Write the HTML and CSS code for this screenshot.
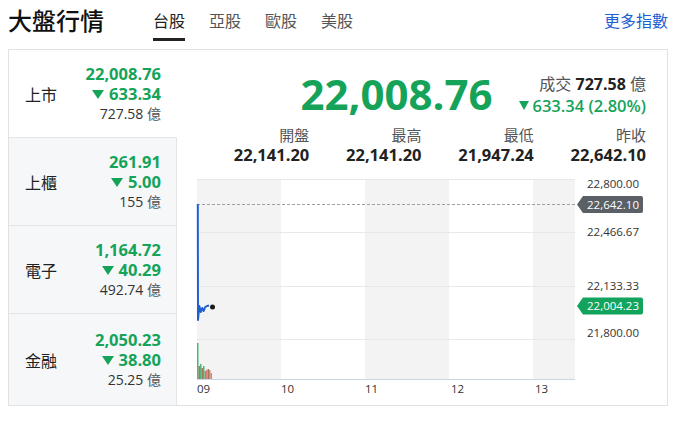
FILE: index.html
```html
<!DOCTYPE html>
<html lang="zh-Hant">
<head>
<meta charset="utf-8">
<title>大盤行情</title>
<link rel="stylesheet" href="styles.css">
</head>
<body>
<div class="header">
  <h1 class="title">大盤行情</h1>
  <nav class="tabs">
    <a class="tab active">台股</a>
    <a class="tab">亞股</a>
    <a class="tab">歐股</a>
    <a class="tab">美股</a>
  </nav>
  <a class="more">更多指數</a>
</div>
<div class="card">
  <div class="list">
    <div class="row active">
      <span class="name">上市</span>
      <div class="vals">
        <div class="price">22,008.76</div>
        <div class="chg"><span class="tri"></span>633.34</div>
        <div class="vol">727.58 <span class="unit">億</span></div>
      </div>
    </div>
    <div class="row">
      <span class="name">上櫃</span>
      <div class="vals">
        <div class="price">261.91</div>
        <div class="chg"><span class="tri"></span>5.00</div>
        <div class="vol">155 <span class="unit">億</span></div>
      </div>
    </div>
    <div class="row">
      <span class="name">電子</span>
      <div class="vals">
        <div class="price">1,164.72</div>
        <div class="chg"><span class="tri"></span>40.29</div>
        <div class="vol">492.74 <span class="unit">億</span></div>
      </div>
    </div>
    <div class="row">
      <span class="name">金融</span>
      <div class="vals">
        <div class="price">2,050.23</div>
        <div class="chg"><span class="tri"></span>38.80</div>
        <div class="vol">25.25 <span class="unit">億</span></div>
      </div>
    </div>
  </div>
  <div class="detail">
    <div class="quote">
      <div class="big">22,008.76</div>
      <div class="side">
        <div class="turnover"><span class="lbl">成交</span> <b>727.58</b> <span class="lbl">億</span></div>
        <div class="change"><span class="tri small"></span>633.34 (2.80%)</div>
      </div>
    </div>
    <div class="stats">
      <div class="stat"><div class="stat-l">開盤</div><div class="stat-v">22,141.20</div></div>
      <div class="stat"><div class="stat-l">最高</div><div class="stat-v">22,141.20</div></div>
      <div class="stat"><div class="stat-l">最低</div><div class="stat-v">21,947.24</div></div>
      <div class="stat"><div class="stat-l">昨收</div><div class="stat-v">22,642.10</div></div>
    </div>
    <svg class="chart" width="490" height="234" viewBox="0 0 490 234" xmlns="http://www.w3.org/2000/svg">
      <rect x="20" y="9" width="84" height="200" fill="#f3f3f3"/>
      <rect x="188" y="9" width="84" height="200" fill="#f3f3f3"/>
      <rect x="356" y="9" width="42" height="200" fill="#f3f3f3"/>
      <g stroke="#e8e8e8" stroke-width="1">
        <line x1="20" y1="9.5" x2="398" y2="9.5"/>
        <line x1="20" y1="62.5" x2="398" y2="62.5"/>
        <line x1="20" y1="116.5" x2="398" y2="116.5"/>
        <line x1="20" y1="169.5" x2="398" y2="169.5"/>
      </g>
      <line x1="20" y1="34.5" x2="400" y2="34.5" stroke="#a0a0a0" stroke-width="1" stroke-dasharray="3 2"/>
      <line x1="20" y1="209.5" x2="398" y2="209.5" stroke="#ccd6eb" stroke-width="1"/>
      <g>
        <rect x="20" y="173" width="1.5" height="36" fill="#4fb57a"/>
        <rect x="21.5" y="196" width="1.5" height="13" fill="#a07a58"/>
        <rect x="23" y="194" width="1.5" height="15" fill="#4fb57a"/>
        <rect x="24.5" y="198" width="1.5" height="11" fill="#a07a58"/>
        <rect x="26" y="196" width="1.5" height="13" fill="#4fb57a"/>
        <rect x="27.5" y="201" width="1.5" height="8" fill="#4fb57a"/>
        <rect x="29" y="200" width="1.5" height="9" fill="#e57c7c"/>
        <rect x="30.5" y="199" width="1.5" height="10" fill="#a07a58"/>
        <rect x="32" y="200" width="1.5" height="9" fill="#e57c7c"/>
        <rect x="33.5" y="203" width="1.5" height="6" fill="#e57c7c"/>
      </g>
      <path d="M20.8 34 L21 150 L22.3 136 L23.8 142 L25.2 138 L26.7 141 L28.2 137 L30 136 L32 135.5" fill="none" stroke="#1e5fd0" stroke-width="2" stroke-linejoin="round"/>
      <circle cx="35.5" cy="137" r="2.5" fill="#1a1a1a"/>
      <g class="axis-x">
        <text x="20" y="223">09</text>
        <text x="104" y="223">10</text>
        <text x="188" y="223">11</text>
        <text x="274" y="223">12</text>
        <text x="358" y="223">13</text>
      </g>
      <g class="axis-y">
        <text x="410" y="18">22,800.00</text>
        <text x="410" y="66">22,466.67</text>
        <text x="410" y="120">22,133.33</text>
        <text x="410" y="167">21,800.00</text>
      </g>
      <path d="M400 34.5 L406 26 H464 Q466 26 466 28 V41 Q466 43 464 43 H406 Z" fill="#5a6066"/>
      <text class="badge-t" x="410" y="38.5">22,642.10</text>
      <path d="M400 136 L406 127.5 H464 Q466 127.5 466 129.5 V142.5 Q466 144.5 464 144.5 H406 Z" fill="#12a35d"/>
      <text class="badge-t" x="410" y="140">22,004.23</text>
    </svg>
  </div>
</div>
</body>
</html>
```

FILE: styles.css
```css
body {
  margin: 0;
  width: 684px;
  background: #fff;
  color: #222;
  font-family: "Open Sans", "Noto Sans CJK TC", sans-serif;
}

.header {
  display: flex;
  align-items: flex-start;
  height: 49px;
  padding: 0 16px 0 8px;
}

.title {
  margin: 5px 0 0;
  font-family: "Noto Sans CJK TC", sans-serif;
  font-size: 24px;
  line-height: 30px;
  font-weight: 500;
  color: #111;
}

.tabs {
  display: flex;
  gap: 24px;
  margin-left: 49px;
}

.tab {
  font-family: "Noto Sans CJK TC", sans-serif;
  font-size: 16px;
  line-height: 24px;
  padding: 8px 0 6px;
  border-bottom: 3px solid transparent;
  color: #555;
}

.tab.active {
  color: #222;
  border-bottom-color: #222;
}

.more {
  margin-left: auto;
  margin-top: 8px;
  font-family: "Noto Sans CJK TC", sans-serif;
  font-size: 16px;
  line-height: 24px;
  color: #1d5fd4;
}

.card {
  margin-left: 8px;
  width: 660px;
  height: 357px;
  box-sizing: border-box;
  border: 1px solid #e2e2e2;
  display: grid;
  grid-template-columns: 168px 1fr;
}

.list {
  display: grid;
  grid-template-rows: 88px 88px 88px 1fr;
}

.row {
  display: flex;
  align-items: center;
  justify-content: space-between;
  box-sizing: border-box;
  padding: 0 15px 0 16px;
  background: #f5f7f9;
  border-bottom: 1px solid #e3e5e8;
  border-right: 1px solid #e3e5e8;
}

.row:last-child {
  border-bottom: none;
}

.row.active {
  background: #fff;
  border-right-color: #fff;
}

.name {
  font-family: "Noto Sans CJK TC", sans-serif;
  font-size: 16px;
  color: #222;
}

.vals {
  text-align: right;
}

.price,
.chg {
  font-size: 16.5px;
  line-height: 20px;
  font-weight: 700;
  color: #15a35a;
}

.chg {
  display: flex;
  align-items: center;
  justify-content: flex-end;
}

.tri {
  display: inline-block;
  width: 0;
  height: 0;
  border-left: 6px solid transparent;
  border-right: 6px solid transparent;
  border-top: 9px solid #15a35a;
  margin-right: 5px;
}

.tri.small {
  border-left-width: 5.5px;
  border-right-width: 5.5px;
  border-top-width: 9px;
  margin-right: 3px;
}

.vol {
  font-size: 14px;
  line-height: 19px;
  color: #333;
}

.unit {
  font-family: "Noto Sans CJK TC", sans-serif;
  color: #555;
}

.detail {
  padding: 0 21px 0 20px;
}

.quote {
  display: flex;
  justify-content: flex-end;
  align-items: center;
  gap: 27px;
  margin-top: 18px;
  height: 52px;
}

.big {
  font-size: 42px;
  line-height: 52px;
  font-weight: 700;
  color: #15a35a;
}

.side {
  text-align: right;
  font-size: 16px;
  line-height: 21px;
}

.turnover .lbl {
  font-family: "Noto Sans CJK TC", sans-serif;
  color: #555;
}

.turnover b {
  color: #222;
  font-weight: 700;
}

.change {
  display: flex;
  align-items: center;
  justify-content: flex-end;
  font-size: 16.5px;
  color: #15a35a;
  font-weight: 600;
}

.stats {
  display: grid;
  grid-template-columns: repeat(4, 1fr);
  margin-top: 5px;
  text-align: right;
}

.stat-l {
  font-family: "Noto Sans CJK TC", sans-serif;
  font-size: 15px;
  line-height: 20px;
  color: #555;
}

.stat-v {
  font-size: 16.5px;
  line-height: 19px;
  font-weight: 700;
  color: #222;
}

.chart {
  display: block;
  margin: 6px -21px 0 -20px;
  font-family: "Open Sans", sans-serif;
}

.axis-x text {
  font-size: 11.5px;
  fill: #333;
}

.axis-y text {
  font-size: 11.5px;
  fill: #333;
}

.badge-t {
  font-size: 11.5px;
  fill: #fff;
}
```
